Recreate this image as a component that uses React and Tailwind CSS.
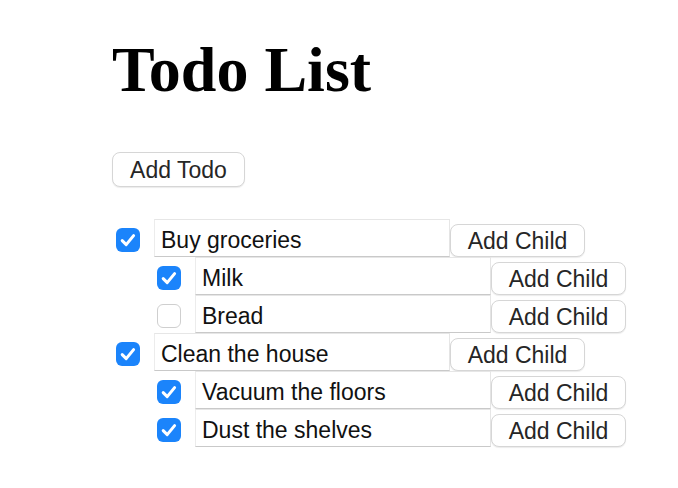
import React from "react";

const todos = [
  {
    text: "Buy groceries",
    done: true,
    children: [
      { text: "Milk", done: true },
      { text: "Bread", done: false },
    ],
  },
  {
    text: "Clean the house",
    done: true,
    children: [
      { text: "Vacuum the floors", done: true },
      { text: "Dust the shelves", done: true },
    ],
  },
];

const Check = ({ checked }) =>
  checked ? (
    <div className="w-[24px] h-[24px] rounded-[6px] bg-[#1b84fb] flex items-center justify-center shrink-0">
      <svg width="20" height="20" viewBox="0 0 20 20" fill="none">
        <path d="M4.2 10.6 L8.2 14.6 L15.6 5.6" stroke="white" strokeWidth="3" strokeLinecap="round" strokeLinejoin="round" />
      </svg>
    </div>
  ) : (
    <div className="w-[24px] h-[24px] rounded-[6px] bg-white border border-[#cfcfcf] shrink-0" />
  );

const Row = ({ item, indent }) => (
  <div className={`flex items-center h-[38px] ${indent ? "pl-[45px]" : "pl-[4px]"}`}>
    <div className="mt-[4px]">
      <Check checked={item.done} />
    </div>
    <div className="ml-[14px] w-[296px] h-[38px] border border-[#e6e6e6] border-b-[#c9c9c9] border-l-[#ececec] bg-white flex items-center px-[6px] pt-[5px] text-[23px] text-[#111]">
      {item.text}
    </div>
    <button className="mt-[5px] w-[135px] h-[33px] pt-[2px] rounded-[8px] border border-[#d6d6d6] bg-white shadow-[0_1px_1px_rgba(0,0,0,0.08)] text-[23px] text-[#262626] flex items-center justify-center">
      Add Child
    </button>
  </div>
);

export default function App() {
  return (
    <div className="w-[678px] h-[488px] bg-white overflow-hidden" style={{ fontFamily: '"Liberation Sans", Arial, sans-serif' }}>
      <div className="pl-[112px] pt-[38px]">
        <h1 className="text-[64px] leading-[64px] font-bold text-black" style={{ fontFamily: '"Liberation Serif", "Times New Roman", serif' }}>
          Todo List
        </h1>
        <button className="mt-[50px] w-[133px] h-[35px] pt-[2px] rounded-[8px] border border-[#d6d6d6] bg-white shadow-[0_1px_1px_rgba(0,0,0,0.08)] text-[23px] text-[#262626] flex items-center justify-center">
          Add Todo
        </button>
        <div className="mt-[32px] flex flex-col">
          {todos.map((t, i) => (
            <React.Fragment key={i}>
              <Row item={t} />
              {t.children.map((c, j) => (
                <Row key={j} item={c} indent />
              ))}
            </React.Fragment>
          ))}
        </div>
      </div>
    </div>
  );
}
